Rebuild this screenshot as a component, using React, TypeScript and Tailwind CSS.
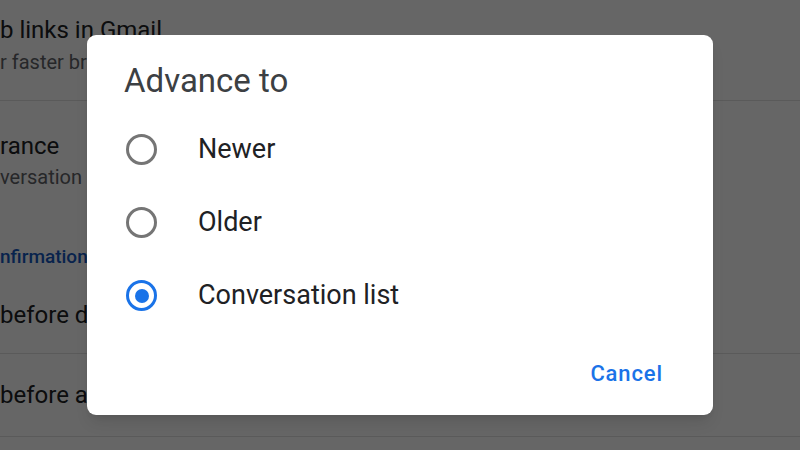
const options = ["Newer", "Older", "Conversation list"];

function Radio({ checked }: { checked: boolean }) {
  return (
    <span
      className={`flex h-[31px] w-[31px] shrink-0 items-center justify-center rounded-full border-[3px] ${
        checked ? "border-[#1a73e8]" : "border-[#757575]"
      }`}
    >
      {checked && <span className="h-[14px] w-[14px] rounded-full bg-[#1a73e8]" />}
    </span>
  );
}

export default function App() {
  return (
    <div
      className="relative h-[450px] w-[800px] overflow-hidden bg-white"
      style={{ fontFamily: "Roboto, 'Liberation Sans', sans-serif" }}
    >
      {/* settings page behind the dialog */}
      <div className="flex flex-col text-[#202124]">
        <div className="flex h-[101px] flex-col border-b border-[#e0e0e0] pt-[15px]">
          <span className="text-[24px] leading-[30px]">b links in Gmail</span>
          <span className="mt-[4px] text-[20px] leading-[26px] text-[#5f6368]">r faster browsing</span>
        </div>
        <div className="flex flex-col border-b border-[#e0e0e0] pt-[30px] pb-[23px]">
          <span className="text-[24px] leading-[30px]">rance</span>
          <span className="mt-[1px] text-[20px] leading-[30px] text-[#5f6368]">versation</span>
          <span className="mt-[52px] text-[19px] font-medium leading-[26px] text-[#1558c0]">nfirmations</span>
          <span className="mt-[30px] text-[24px] leading-[30px]">before deleting</span>
        </div>
        <div className="flex h-[83px] items-center border-b border-[#e0e0e0]">
          <span className="text-[24px]">before archiving</span>
        </div>
      </div>

      {/* scrim + dialog */}
      <div className="absolute inset-0 flex items-center justify-center bg-black/60">
        <div className="flex h-[380px] w-[626px] flex-col rounded-[9px] bg-white pt-[27px] pb-[16px] shadow-lg">
          <div className="h-[38px] pl-[37px] text-[33px] leading-[38px] text-[#3c4043]">Advance to</div>
          <div className="mt-[13px] flex flex-col">
            {options.map((opt, i) => (
              <div key={opt} className="flex h-[73px] items-center gap-[41px] pl-[39px]">
                <Radio checked={i === 2} />
                <span className="text-[27px] text-[#202124]">{opt}</span>
              </div>
            ))}
          </div>
          <div className="mt-[17px] flex h-[48px] justify-end pr-[42px]">
            <button className="px-[8px] text-[22px] font-medium tracking-[0.04em] text-[#1a73e8]">Cancel</button>
          </div>
        </div>
      </div>
    </div>
  );
}
